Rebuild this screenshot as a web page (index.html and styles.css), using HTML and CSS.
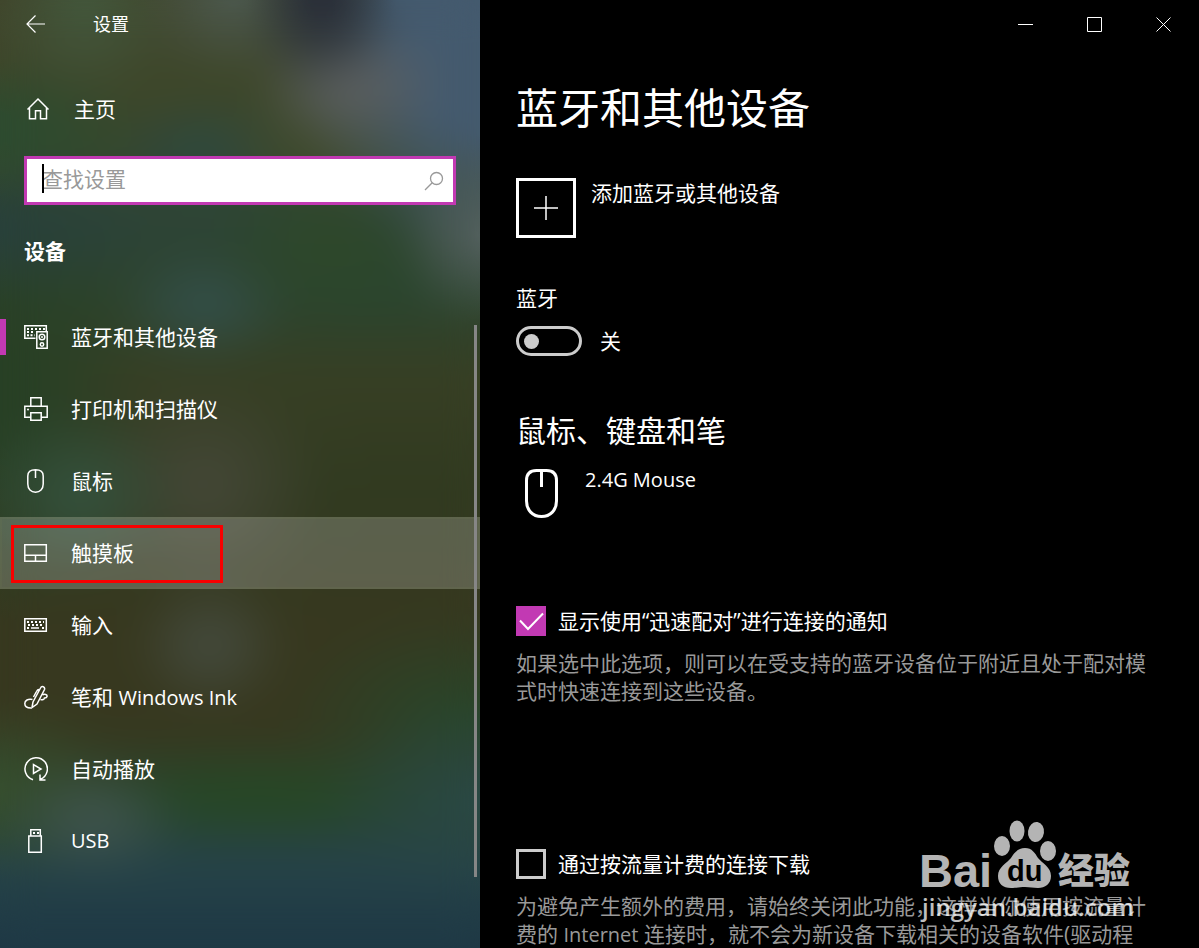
FILE: index.html
```html
<!DOCTYPE html>
<html lang="zh-CN">
<head>
    <meta charset="UTF-8">
    <meta name="viewport" content="width=device-width, initial-scale=1.0">
    <title>设置</title>
    <link rel="stylesheet" href="styles.css">
</head>
<body>

    <!-- Sidebar -->
    <aside class="sidebar">
        <header class="app-bar">
            <button class="back-btn" aria-label="返回">
                <svg width="20" height="18" viewBox="0 0 20 18"><path d="M19 9H1M9.500 .5L1 9l8.500 8.500"/></svg>
            </button>
            <span class="app-title">设置</span>
        </header>

        <a class="home-link" href="#">
            <svg width="24" height="24" viewBox="0 0 24 24"><path d="M1.500 12.500L12 2l10.500 10.500M3.500 10.500V21.800h6v-8h5v8h6V10.500"/></svg>
            <span>主页</span>
        </a>

        <div class="search">
            <input type="text" placeholder="查找设置" aria-label="查找设置">
            <span class="caret"></span>
            <svg width="20" height="20" viewBox="0 0 20 20"><circle cx="12.500" cy="7.500" r="6"/><path d="M8.200 11.800L1 19"/></svg>
        </div>

        <h2>设备</h2>

        <nav>
            <a class="nav-item active" href="#">
                <svg width="24" height="24" viewBox="0 0 24 24">
                    <path d="M11.500 13.200H.8V.8h21.500V6M12.800 6.800h10.400v16.400H12.800z"/>
                    <path class="dots" d="M3 4h18M3 7h8M3 10.200h2M6.500 10.200h4.500"/>
                    <circle cx="18" cy="12" r="2.800"/><circle cx="18" cy="19.500" r="1.700"/>
                    <circle class="fill" cx="18" cy="12" r="1"/>
                </svg>
                <span>蓝牙和其他设备</span>
            </a>
            <a class="nav-item" href="#">
                <svg width="24" height="24" viewBox="0 0 24 24">
                    <path d="M6.800 9V.8h10.400V9M6.200 20.200H.8V9.300h22.400v10.900h-5.400M6.800 15.800h10.400v7.400H6.800z"/>
                    <circle class="fill" cx="4" cy="12.500" r="1"/>
                </svg>
                <span>打印机和扫描仪</span>
            </a>
            <a class="nav-item" href="#">
                <svg width="24" height="24" viewBox="0 0 24 24"><path d="M11.500 .8c5.500 0 7.700 1.700 7.700 6.200v8c0 5-3.200 8.200-7.700 8.200S3.800 20 3.800 15V7c0-4.500 2.200-6.200 7.700-6.200zM11.500 .8V9"/></svg>
                <span>鼠标</span>
            </a>
            <a class="nav-item hover" href="#">
                <svg width="24" height="24" viewBox="0 0 24 24"><path d="M.8 3.800h21.500v16.500H.8zM.8 14.200h21.500M11.500 14.200v6"/></svg>
                <span>触摸板</span>
                <i class="mark"></i>
            </a>
            <a class="nav-item" href="#">
                <svg width="24" height="24" viewBox="0 0 24 24">
                    <path d="M.8 5.800h21.500v12.400H.8z"/>
                    <path class="dots" d="M3 9h17M4 12h16M3 15h2M18 15h2"/><path d="M7 15h8"/>
                </svg>
                <span>输入</span>
            </a>
            <a class="nav-item" href="#">
                <svg width="24" height="24" viewBox="0 0 24 24">
                    <path d="M8 22.500l1-5.500L16.500 3c1.200-2.500 4.800-1.300 4 1.500L13 19l-5 3.500zM15 4.500c-1.500 0-2 1-2.500 2L9.500 12M18.500 10c2-1.500 5-.5 4.500 1.500-.3 1.500-2 1.500-2.500 1.500 0 1.500-2 2-4 1.500M8.500 14.500C4 13.500.8 15.500.8 18.500c0 3 2.200 4.500 6.200 4.500"/>
                </svg>
                <span>笔和 <span class="latin">Windows Ink</span></span>
            </a>
            <a class="nav-item" href="#">
                <svg width="24" height="24" viewBox="0 0 24 24">
                    <path d="M9 22.700A11.200 11.200 0 1 1 16.500 22.300M16 17.500v5.500h5.500M9.500 7.500v9l7.500-4.500z"/>
                </svg>
                <span>自动播放</span>
            </a>
            <a class="nav-item" href="#">
                <svg width="24" height="24" viewBox="0 0 24 24">
                    <path d="M4.800 7h12.500v16.200H4.800zM6.800 7V.8h9.500V7"/><path class="dots" d="M9 4h6"/>
                </svg>
                <span class="latin">USB</span>
            </a>
        </nav>
        <div class="scrollbar"></div>
    </aside>

    <!-- Main content -->
    <main class="content">
        <div class="window-controls">
            <button aria-label="最小化"><svg width="15" height="15" viewBox="0 0 15 15"><path d="M0 7.500h15"/></svg></button>
            <button aria-label="最大化"><svg width="15" height="15" viewBox="0 0 15 15"><path d="M.5 .5h14v14H.5z"/></svg></button>
            <button aria-label="关闭"><svg width="15" height="15" viewBox="0 0 15 15"><path d="M.5 .5l14 14M14.500 .5l-14 14"/></svg></button>
        </div>

        <div class="page">
            <h1>蓝牙和其他设备</h1>

            <button class="add-device">
                <span class="plus"><svg width="24" height="24" viewBox="0 0 24 24"><path d="M12 0v24M0 12h24"/></svg></span>
                <span class="add-text">添加蓝牙或其他设备</span>
            </button>

            <label class="switch-label" for="bluetooth">蓝牙</label>
            <div class="switch-row">
                <input class="switch" type="checkbox" role="switch" id="bluetooth">
                <span>关</span>
            </div>

            <h3>鼠标、键盘和笔</h3>
            <div class="device">
                <svg width="33" height="49" viewBox="0 0 33 49"><path d="M11.500 1.500h10c6.500 0 10 3.500 10 10V32c0 9-6 15.500-15 15.500S1.500 41 1.500 32V11.500c0-6.500 3.500-10 10-10zM16.500 1.500V18"/></svg>
                <span class="latin">2.4G Mouse</span>
            </div>

            <label class="check">
                <input type="checkbox" checked>
                <svg width="30" height="30" viewBox="0 0 30 30"><path d="M4 14.500l8 8.500L27 7.500"/></svg>
                <span>显示使用“迅速配对”进行连接的通知</span>
            </label>
            <p>如果选中此选项，则可以在受支持的蓝牙设备位于附近且处于配对模式时快速连接到这些设备。</p>

            <label class="check metered">
                <input type="checkbox">
                <span>通过按流量计费的连接下载</span>
            </label>
            <p>为避免产生额外的费用，请始终关闭此功能，这样当你使用按流量计费的 <span class="latin">Internet</span> 连接时，就不会为新设备下载相关的设备软件(驱动程</p>
        </div>

        <!-- Watermark -->
        <svg class="watermark" width="220" height="106" viewBox="0 0 220 106">
            <g class="logo">
                <ellipse cx="82" cy="26" rx="8" ry="10"/>
                <ellipse cx="97" cy="11" rx="7.500" ry="10.500"/>
                <ellipse cx="116" cy="12" rx="8" ry="10" transform="rotate(8 116 12)"/>
                <ellipse cx="128" cy="31" rx="8" ry="10"/>
                <path d="M105 28c7 0 10 5 13 10 4 5 13 9 13 18 0 8-6 12-13 12-5 0-8-1-13-1s-8 1-14 1c-8 0-13-4-13-12 0-9 9-13 13-18 3-5 7-10 14-10z"/>
                <text class="name" x="-1" y="67">Bai</text>
                <text class="cjk" x="138" y="64">经验</text>
            </g>
            <text class="du" x="87" y="61">du</text>
            <text class="url" x="2" y="96">jingyan.baidu.com</text>
        </svg>
    </main>

</body>
</html>
```
FILE: styles.css
```css
* {
    margin: 0;
    padding: 0;
    box-sizing: border-box;
}
body {
    display: flex;
    height: 100vh;
    overflow: hidden;
    background-color: #000;
    color: #fff;
    font-family: "Open Sans", "Noto Sans CJK SC", sans-serif;
    font-size: 21px;
    line-height: 28px;
}
a {
    color: inherit;
    text-decoration: none;
}
button {
    background: none;
    border: none;
    color: inherit;
    font: inherit;
}
svg {
    display: block;
    flex: none;
    fill: none;
    stroke: #fff;
    stroke-width: 1.5;
}
svg .fill {
    fill: #fff;
    stroke: none;
}
svg .dots {
    stroke-width: 2;
    stroke-dasharray: 2 2;
}
.latin {
    font-size: 20px;
}

/* Sidebar */
.sidebar {
    position: relative;
    isolation: isolate;
    overflow: hidden;
    flex: none;
    width: 480px;
    background:
        radial-gradient(ellipse 75px 80px at 322px 8px, #292e38 15%, transparent),
        radial-gradient(ellipse 100px 65px at 350px 85px, #5e6060, transparent),
        radial-gradient(ellipse 80px 90px at 478px 235px, #566260, transparent),
        radial-gradient(ellipse 200px 230px at 480px 30px, #445a6e 45%, transparent),
        radial-gradient(ellipse 100px 70px at 235px 5px, #4d5a50, transparent),
        radial-gradient(ellipse 90px 80px at 85px 15px, #43583d, transparent),
        radial-gradient(ellipse 150px 60px at 360px 148px, #464c2c, transparent),
        radial-gradient(ellipse 100px 50px at 205px 150px, #2d4840, transparent),
        radial-gradient(ellipse 130px 80px at 330px 240px, #2e4829, transparent),
        radial-gradient(ellipse 90px 60px at 205px 305px, #34504c, transparent),
        radial-gradient(ellipse 140px 60px at 370px 280px, #29452f, transparent),
        radial-gradient(ellipse 130px 70px at 10px 130px, #2d4b2f 20%, transparent),
        radial-gradient(ellipse 150px 70px at 10px 230px, #28403b, transparent),
        radial-gradient(ellipse 100px 90px at 80px 495px, #35533f, transparent),
        radial-gradient(ellipse 120px 110px at 205px 485px, #454838, transparent),
        radial-gradient(ellipse 130px 220px at 10px 400px, #284025 20%, transparent),
        radial-gradient(ellipse 80px 70px at 210px 645px, #454c40, transparent),
        radial-gradient(ellipse 90px 60px at 95px 820px, #41554f, transparent),
        radial-gradient(ellipse 130px 90px at 0px 790px, #374f2e, transparent),
        radial-gradient(ellipse 160px 100px at 480px 800px, #2a4846, transparent),
        radial-gradient(ellipse 180px 110px at 460px 720px, #28462a, transparent),
        radial-gradient(ellipse 200px 50px at 260px 797px, #264824, transparent),
        linear-gradient(#40452b, #3d472a 10%, #37472c 16%, #2d4437 23%, #2d432c 32%, #373f24 40%, #313a20 52%, #37381f 66%, #37381f 77%, #29442d 84%, #264348 91%, #1e3845);
}
/* frosted wallpaper */
.sidebar::before {
    content: "";
    position: absolute;
    inset: 0;
    z-index: -1;
    background: inherit;
    filter: blur(18px);
}
.app-bar {
    display: flex;
    align-items: center;
    height: 48px;
    padding-left: 26px;
}
.back-btn svg {
    stroke-width: 1.2;
}
.app-title {
    margin-left: 47px;
    font-size: 18px;
}
.home-link {
    display: flex;
    align-items: center;
    gap: 24px;
    height: 72px;
    margin: 25px 0 11px;
    padding-left: 26px;
}
.search {
    position: relative;
    margin: 0 24px;
}
.search input {
    display: block;
    width: 100%;
    height: 49px;
    padding: 0 50px 3px 15px;
    border: 3px solid #c239b3;
    outline: none;
    background-color: #fff;
    color: #000;
    font: inherit;
}
.search input::placeholder {
    color: #999;
    opacity: 1;
}
.search svg {
    position: absolute;
    top: 15px;
    right: 12px;
    stroke: #999;
    stroke-width: 1.3;
}
.caret {
    position: absolute;
    top: 8px;
    left: 18px;
    width: 2px;
    height: 29px;
    background-color: #000;
}
.sidebar h2 {
    margin: 32px 24px 36px;
    font-size: 21px;
    font-weight: bold;
}
.nav-item {
    position: relative;
    display: flex;
    align-items: center;
    gap: 23px;
    height: 72px;
    padding-left: 24px;
}
.nav-item.active::before {
    content: "";
    position: absolute;
    left: 0;
    width: 6px;
    height: 36px;
    background-color: #c239b3;
}
.nav-item.hover {
    background-color: rgba(255, 255, 255, 0.2);
    border: 2px solid rgba(110, 120, 80, 0.2);
    padding-left: 22px;
}
.mark {
    position: absolute;
    top: 6px;
    left: 9px;
    width: 212px;
    height: 58px;
    border: 3px solid #f80000;
}
.scrollbar {
    position: absolute;
    top: 325px;
    right: 3px;
    bottom: 71px;
    width: 3px;
    background-color: #868686;
}

/* Content */
.content {
    position: relative;
    flex: 1;
    min-width: 0;
}
.window-controls {
    display: flex;
    justify-content: flex-end;
    height: 48px;
    padding-right: 1px;
}
.window-controls button {
    display: flex;
    justify-content: center;
    align-items: center;
    width: 69px;
}
.window-controls svg {
    stroke-width: 1;
}
.page {
    padding: 30px 50px 0 36px;
}
h1 {
    font-size: 42px;
    font-weight: normal;
    line-height: 60px;
}
.add-device {
    display: flex;
    gap: 15px;
    margin: 40px 0 46px;
}
.plus {
    display: flex;
    justify-content: center;
    align-items: center;
    width: 60px;
    height: 60px;
    border: 3px solid #fff;
}
.add-text {
    padding-top: 1px;
}
.switch-label {
    display: block;
}
.switch-row {
    display: flex;
    align-items: center;
    gap: 18px;
    height: 30px;
    margin-top: 14px;
}
.switch {
    appearance: none;
    display: flex;
    align-items: center;
    width: 66px;
    height: 30px;
    padding-left: 5px;
    border: 3px solid #ccc;
    border-radius: 15px;
}
.switch::before {
    content: "";
    width: 15px;
    height: 15px;
    border-radius: 50%;
    background-color: #ccc;
}
h3 {
    margin: 55px 0 15px;
    font-size: 30px;
    font-weight: normal;
    line-height: 40px;
}
.device {
    display: flex;
    gap: 27px;
    height: 140px;
    padding-left: 9px;
}
.device svg {
    margin-top: 3px;
    stroke-width: 3;
}
.check {
    position: relative;
    display: flex;
    align-items: center;
    gap: 12px;
    height: 30px;
}
.check input {
    appearance: none;
    width: 30px;
    height: 30px;
    border: 3px solid #ccc;
}
.check input:checked {
    border: none;
    background-color: #c239b3;
}
.check svg {
    position: absolute;
    left: 0;
    stroke-width: 2;
}
.check.metered {
    margin-top: 144px;
}
p {
    margin-top: 13px;
    color: #999;
}

/* Watermark */
.watermark {
    position: absolute;
    right: 59px;
    bottom: 22px;
    stroke: none;
    pointer-events: none;
}
.watermark .logo {
    fill: #b4b4b4;
}
.watermark .name {
    font: bold 47px "Liberation Sans", sans-serif;
}
.watermark .cjk {
    font: 900 36px "Noto Sans CJK SC", sans-serif;
}
.watermark .du {
    fill: #000;
    font: bold 29px "Liberation Sans", sans-serif;
}
.watermark .url {
    fill: rgba(255, 255, 255, 0.75);
    font: 600 24px "Open Sans", sans-serif;
}
```
